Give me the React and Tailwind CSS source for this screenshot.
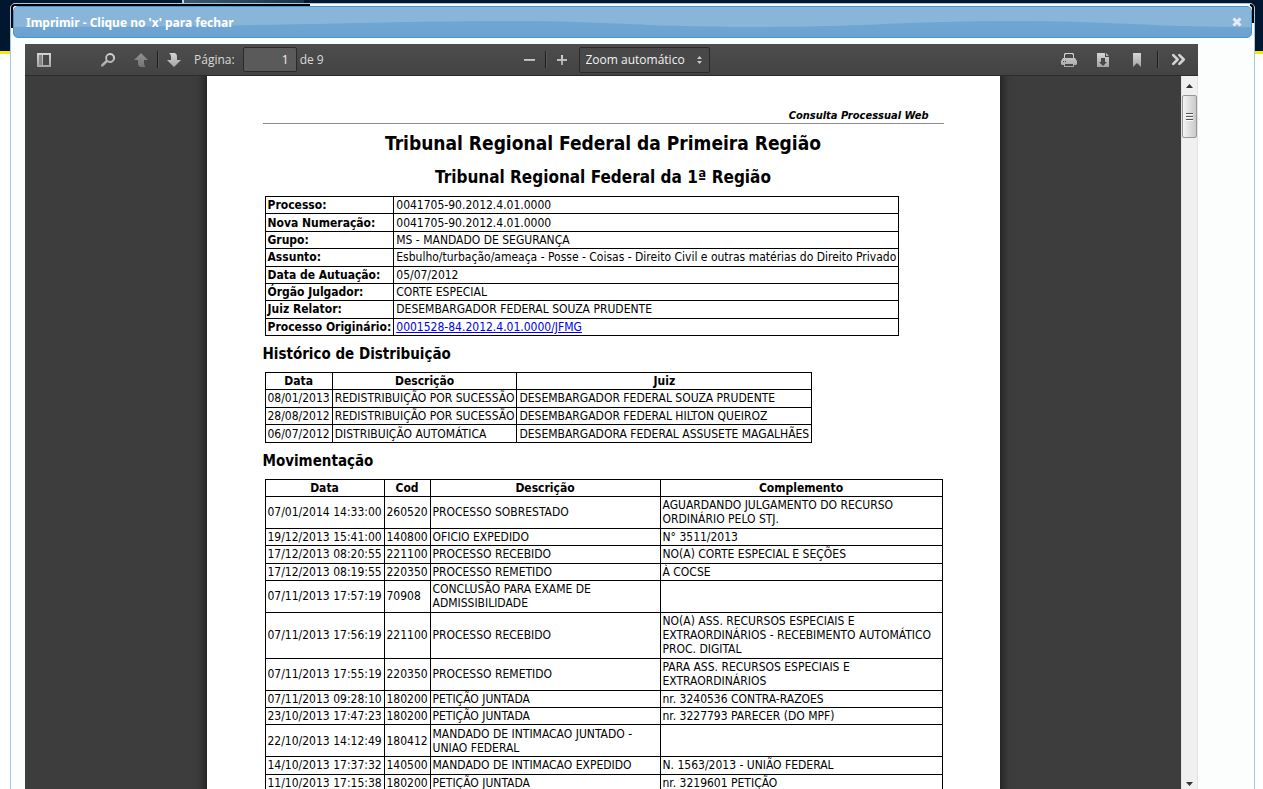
import { ChevronsRight } from 'lucide-react'

const PROCESSO = [
  ['Processo:', '0041705-90.2012.4.01.0000'],
  ['Nova Numeração:', '0041705-90.2012.4.01.0000'],
  ['Grupo:', 'MS - MANDADO DE SEGURANÇA'],
  ['Assunto:', 'Esbulho/turbação/ameaça - Posse - Coisas - Direito Civil e outras matérias do Direito Privado'],
  ['Data de Autuação:', '05/07/2012'],
  ['Órgão Julgador:', 'CORTE ESPECIAL'],
  ['Juiz Relator:', 'DESEMBARGADOR FEDERAL SOUZA PRUDENTE'],
  ['Processo Originário:', '0001528-84.2012.4.01.0000/JFMG', true],
]

const DISTRIBUICAO = [
  ['08/01/2013', 'REDISTRIBUIÇÃO POR SUCESSÃO', 'DESEMBARGADOR FEDERAL SOUZA PRUDENTE'],
  ['28/08/2012', 'REDISTRIBUIÇÃO POR SUCESSÃO', 'DESEMBARGADOR FEDERAL HILTON QUEIROZ'],
  ['06/07/2012', 'DISTRIBUIÇÃO AUTOMÁTICA', 'DESEMBARGADORA FEDERAL ASSUSETE MAGALHÃES'],
]

const MOVIMENTACAO = [
  ['07/01/2014 14:33:00', '260520', 'PROCESSO SOBRESTADO', 'AGUARDANDO JULGAMENTO DO RECURSO ORDINÁRIO PELO STJ.'],
  ['19/12/2013 15:41:00', '140800', 'OFICIO EXPEDIDO', 'N° 3511/2013'],
  ['17/12/2013 08:20:55', '221100', 'PROCESSO RECEBIDO', 'NO(A) CORTE ESPECIAL E SEÇÕES'],
  ['17/12/2013 08:19:55', '220350', 'PROCESSO REMETIDO', 'À COCSE'],
  ['07/11/2013 17:57:19', '70908', 'CONCLUSÃO PARA EXAME DE ADMISSIBILIDADE', ''],
  ['07/11/2013 17:56:19', '221100', 'PROCESSO RECEBIDO', 'NO(A) ASS. RECURSOS ESPECIAIS E EXTRAORDINÁRIOS - RECEBIMENTO AUTOMÁTICO PROC. DIGITAL'],
  ['07/11/2013 17:55:19', '220350', 'PROCESSO REMETIDO', 'PARA ASS. RECURSOS ESPECIAIS E EXTRAORDINÁRIOS'],
  ['07/11/2013 09:28:10', '180200', 'PETIÇÃO JUNTADA', 'nr. 3240536 CONTRA-RAZOES'],
  ['23/10/2013 17:47:23', '180200', 'PETIÇÃO JUNTADA', 'nr. 3227793 PARECER (DO MPF)'],
  ['22/10/2013 14:12:49', '180412', 'MANDADO DE INTIMACAO JUNTADO - UNIAO FEDERAL', ''],
  ['14/10/2013 17:37:32', '140500', 'MANDADO DE INTIMACAO EXPEDIDO', 'N. 1563/2013 - UNIÃO FEDERAL'],
  ['11/10/2013 17:15:38', '180200', 'PETIÇÃO JUNTADA', 'nr. 3219601 PETIÇÃO'],
]

const TABLE = 'border-collapse border border-black text-left text-[12px] leading-[14px]'
const CELL = 'border border-black px-[2px] py-px'

function Icon({ children }) {
  return (
    <svg width="16" height="16" viewBox="0 0 16 16" fill="url(#metal)">
      {children}
    </svg>
  )
}

function ToolButton({ label, className = '', children }) {
  return (
    <button type="button" aria-label={label} title={label} className={`flex h-6 w-8 items-center justify-center ${className}`}>
      {children}
    </button>
  )
}

function Divider({ className = '' }) {
  return <span className={`h-[17px] w-px bg-[#1c1c1c] shadow-[1px_0_0_#5a5a5a] ${className}`} />
}

function Toolbar() {
  return (
    <div className="flex h-8 shrink-0 items-center justify-between border-b border-[#2b2b2b] bg-linear-to-b from-[#4d4d4d] to-[#434343] pr-1 pl-[3px] text-[12px] text-[#d9d9d9]">
      <svg width="0" height="0" className="absolute">
        <linearGradient id="metal" x1="0" y1="0" x2="0" y2="1">
          <stop offset="0" stopColor="#d6d6d6" />
          <stop offset="1" stopColor="#a5a5a5" />
        </linearGradient>
      </svg>

      <div className="flex flex-1 items-center">
        <ToolButton label="Exibir painel">
          <Icon>
            <path fillRule="evenodd" d="M1 1h14v14H1zM3 3v10h3V3zM7 3v10h6V3z" />
            <path fill="#858585" d="M3 3h3v10H3z" />
          </Icon>
        </ToolButton>
        <ToolButton label="Localizar" className="ml-8">
          <Icon>
            <path fillRule="evenodd" d="M10 1a5 5 0 1 1-2.600 9.200L3 14.600 1 14.500l.2-2L5.800 8.200A5 5 0 0 1 10 1zm0 2a3 3 0 1 0 0 6 3 3 0 0 0 0-6z" />
          </Icon>
        </ToolButton>
        <ToolButton label="Página anterior" className="ml-px opacity-50">
          <Icon>
            <path d="M8 1l7 7h-4v3q0 3 2 4H8q-3 0-3-4V8H1z" />
          </Icon>
        </ToolButton>
        <Divider />
        <ToolButton label="Próxima página">
          <Icon>
            <path d="M8 15L1 8h4V5q0-3-2-4h5q3 0 3 4v3h4z" />
          </Icon>
        </ToolButton>
        <label htmlFor="pagina" className="ml-1">Página:</label>
        <input
          id="pagina"
          defaultValue="1"
          className="ml-2 h-[25px] w-[54px] rounded-[2px] border border-[#2a2a2a] bg-[#5a5a5a] px-[7px] text-right text-[12px] text-[#f2f2f2]"
        />
        <span className="ml-[3px]">de 9</span>
      </div>

      <div className="flex items-center">
        <ToolButton label="Reduzir">
          <Icon>
            <path d="M3 7h11v2H3z" />
          </Icon>
        </ToolButton>
        <Divider />
        <ToolButton label="Ampliar">
          <Icon>
            <path d="M7 3h2v4h4v2H9v4H7V9H3V7h4z" />
          </Icon>
        </ToolButton>
        <div className="relative ml-px">
          <select aria-label="Zoom" className="h-[26px] w-[131px] appearance-none rounded-[2px] border border-[#2a2a2a] bg-[#484848] pl-[6px] text-[12px] text-[#f2f2f2]">
            <option>Zoom automático</option>
          </select>
          <svg width="5" height="8" viewBox="0 0 5 8" fill="#c8c8c8" className="pointer-events-none absolute top-[9px] right-2">
            <path d="M2.500 0L5 3H0zM2.500 8L5 5H0z" />
          </svg>
        </div>
      </div>

      <div className="flex flex-1 items-center justify-end">
        <ToolButton label="Imprimir" className="mr-[2px]">
          <Icon>
            <path
              fillRule="evenodd"
              d="M4 1h8l1 1v4h1l2 3v3l-1 1h-2v2H3v-2H1l-1-1V9l2-3h1V2zM5 2L4 3v3h8V3l-1-1zM4 12v2h8v-2zM2 9v1h1V9zM4 9v1h1V9z"
            />
          </Icon>
        </ToolButton>
        <ToolButton label="Baixar" className="mr-[2px]">
          <Icon>
            <path fillRule="evenodd" d="M2 1h8v4h4v10H2zM6 6v4H4l4 4 4-4h-2V6z" />
            <path d="M11 1l3 3h-3z" />
          </Icon>
        </ToolButton>
        <ToolButton label="Marcador">
          <Icon>
            <path d="M4 1h8v14l-4-4-4 4z" />
          </Icon>
        </ToolButton>
        <Divider className="mx-1" />
        <ToolButton label="Ferramentas">
          <ChevronsRight size={21} strokeWidth={3} color="#d4d4d4" />
        </ToolButton>
      </div>
    </div>
  )
}

function Scrollbar() {
  return (
    <div className="flex w-[17px] shrink-0 flex-col items-center border-x border-[#e3e3e3] bg-[#f0f0f0]">
      <button type="button" aria-label="Rolar para cima" className="flex h-[19px] w-full items-center justify-center">
        <svg width="7" height="4" viewBox="0 0 7 4" fill="#333">
          <path d="M0 4l3.500-4L7 4z" />
        </svg>
      </button>
      <div className="flex h-[43px] w-[15px] flex-col items-center justify-center gap-px rounded-[2px] border border-[#979797] bg-linear-to-r from-[#f5f5f5] to-[#c9c9cb]">
        <span className="h-[2px] w-[7px] border-b border-white bg-[#555]" />
        <span className="h-[2px] w-[7px] border-b border-white bg-[#555]" />
        <span className="h-[2px] w-[7px] border-b border-white bg-[#555]" />
      </div>
      <button type="button" aria-label="Rolar para baixo" className="mt-auto flex h-[11px] w-full items-center justify-center">
        <svg width="7" height="4" viewBox="0 0 7 4" fill="#333">
          <path d="M0 0l3.500 4L7 0z" />
        </svg>
      </button>
    </div>
  )
}

function Documento() {
  return (
    <article className="mx-auto w-[793px] bg-white px-14 pt-8 pb-14 font-['DejaVu_Sans_Condensed','DejaVu_Sans',sans-serif] text-black shadow-[0_0_8px_3px_rgba(0,0,0,0.5)]">
      <p className="border-b border-[#8c8c8c] pr-[15px] text-right text-[11px] leading-[15px] font-bold italic">
        Consulta Processual Web
      </p>
      <h1 className="mt-[7px] text-center text-[19px] leading-6 font-bold">Tribunal Regional Federal da Primeira Região</h1>
      <h2 className="mt-3 text-center text-[17px] leading-5 font-bold">Tribunal Regional Federal da 1ª Região</h2>

      <table className={`${TABLE} mt-[9px] ml-[2px] h-[140px]`}>
        <tbody>
          {PROCESSO.map(([rotulo, valor, link]) => (
            <tr key={rotulo}>
              <th scope="row" className={CELL}>{rotulo}</th>
              <td className={CELL}>
                {link ? <a href="#originario" className="text-[#0000ee] underline">{valor}</a> : valor}
              </td>
            </tr>
          ))}
        </tbody>
      </table>

      <h3 className="mt-2 text-[15px] leading-5 font-bold">Histórico de Distribuição</h3>
      <table className={`${TABLE} mt-2 ml-[2px] h-[71px]`}>
        <thead>
          <tr className="text-center">
            {['Data', 'Descrição', 'Juiz'].map((t) => (
              <th key={t} className={CELL}>{t}</th>
            ))}
          </tr>
        </thead>
        <tbody>
          {DISTRIBUICAO.map((linha) => (
            <tr key={linha[0]}>
              {linha.map((c, i) => (
                <td key={i} className={CELL}>{c}</td>
              ))}
            </tr>
          ))}
        </tbody>
      </table>

      <h3 className="mt-2 text-[15px] leading-5 font-bold">Movimentação</h3>
      <table className={`${TABLE} mt-2 ml-[2px] h-[313px] w-[678px] table-fixed`}>
        <colgroup>
          <col className="w-[119px]" />
          <col className="w-[46px]" />
          <col className="w-[230px]" />
          <col />
        </colgroup>
        <thead>
          <tr className="text-center">
            {['Data', 'Cod', 'Descrição', 'Complemento'].map((t) => (
              <th key={t} className={CELL}>{t}</th>
            ))}
          </tr>
        </thead>
        <tbody>
          {MOVIMENTACAO.map((linha) => (
            <tr key={linha[0]}>
              {linha.map((c, i) => (
                <td key={i} className={i === 0 ? `${CELL} whitespace-nowrap` : CELL}>{c}</td>
              ))}
            </tr>
          ))}
        </tbody>
      </table>
    </article>
  )
}

export default function App() {
  return (
    <div className="relative h-screen overflow-hidden bg-white font-['Open_Sans','Noto_Sans',sans-serif]">
      <header className="h-[54px] border-b-[3px] border-[#f5ec00] bg-[#00172f]">
        <div className="ml-[182px] h-[3px] w-[122px] border-l-2 border-[#c9ced3] bg-linear-to-r from-[#3f5a6c] to-[#1b3348]" />
      </header>

      <div role="dialog" aria-labelledby="titulo" className="absolute top-[3px] right-2 -bottom-2 left-[10px] flex flex-col rounded-[5px] border border-[#a6c9e2] bg-[#fcfdfd] p-[2px]">
        {/* restos da moldura preta nos cantos da janela */}
        <span className="absolute top-0 left-0 h-6 w-[299px] rounded-tl-[4px] border-t-2 border-l-2 border-black" />
        <span className="absolute top-0 right-0 h-[19px] w-1 rounded-tr-[4px] border-t-2 border-r-2 border-black" />

        <div className="relative flex h-8 shrink-0 items-center justify-between overflow-hidden rounded-[5px] border border-[#4297d7] bg-linear-to-b from-[#74aad4] to-[#6ba2d1] pr-[9px] pl-3">
          <svg className="absolute inset-0 h-full w-full" viewBox="0 0 1240 30" preserveAspectRatio="none" fill="#89b5d9">
            <path d="M0 0H1240V20C1140 20 1100 14 1000 14S850 20 740 20 600 14 490 14 250 20 0 20z" />
          </svg>
          <h2 id="titulo" className="relative pt-px font-['Noto_Sans','Open_Sans',sans-serif] text-[12px] font-bold text-white">
            Imprimir - Clique no 'x' para fechar
          </h2>
          <button type="button" aria-label="Fechar" className="relative">
            <svg width="10" height="10" viewBox="0 0 10 10" stroke="#e3edf7" strokeWidth="3">
              <path d="M1.500 1.500l7 7M8.500 1.500l-7 7" />
            </svg>
          </button>
        </div>

        <div className="mt-[6px] mr-[54px] ml-3 flex min-h-0 flex-1 flex-col bg-[#3d3d3d]">
          <Toolbar />
          <div className="mb-[5px] flex min-h-0 flex-1">
            <main className="min-w-0 flex-1 overflow-hidden">
              <Documento />
            </main>
            <Scrollbar />
          </div>
        </div>
      </div>
    </div>
  )
}
